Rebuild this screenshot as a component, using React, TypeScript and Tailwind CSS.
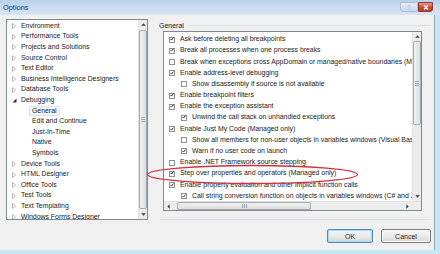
import React from 'react';

const tree = [
  { t: 'Environment', l: 0 },
  { t: 'Performance Tools', l: 0 },
  { t: 'Projects and Solutions', l: 0 },
  { t: 'Source Control', l: 0 },
  { t: 'Text Editor', l: 0 },
  { t: 'Business Intelligence Designers', l: 0 },
  { t: 'Database Tools', l: 0 },
  { t: 'Debugging', l: 0, open: true },
  { t: 'General', l: 1, sel: true },
  { t: 'Edit and Continue', l: 1 },
  { t: 'Just-In-Time', l: 1 },
  { t: 'Native', l: 1 },
  { t: 'Symbols', l: 1 },
  { t: 'Device Tools', l: 0 },
  { t: 'HTML Designer', l: 0 },
  { t: 'Office Tools', l: 0 },
  { t: 'Test Tools', l: 0 },
  { t: 'Text Templating', l: 0 },
  { t: 'Windows Forms Designer', l: 0 },
];

const options = [
  { t: 'Ask before deleting all breakpoints', l: 0, c: true },
  { t: 'Break all processes when one process breaks', l: 0, c: true },
  { t: 'Break when exceptions cross AppDomain or managed/native boundaries (Managed only)', l: 0, c: false },
  { t: 'Enable address-level debugging', l: 0, c: true },
  { t: 'Show disassembly if source is not available', l: 1, c: false },
  { t: 'Enable breakpoint filters', l: 0, c: true },
  { t: 'Enable the exception assistant', l: 0, c: true },
  { t: 'Unwind the call stack on unhandled exceptions', l: 1, c: true },
  { t: 'Enable Just My Code (Managed only)', l: 0, c: true },
  { t: 'Show all members for non-user objects in variables windows (Visual Basic only)', l: 1, c: false },
  { t: 'Warn if no user code on launch', l: 1, c: true },
  { t: 'Enable .NET Framework source stepping', l: 0, c: false },
  { t: 'Step over properties and operators (Managed only)', l: 0, c: true },
  { t: 'Enable property evaluation and other implicit function calls', l: 0, c: true },
  { t: 'Call string conversion function on objects in variables windows (C# and JavaScript only)', l: 1, c: true },
];

function Arrow({ dir }: { dir: 'up' | 'down' | 'left' | 'right' }) {
  const pts = {
    up: '0,4 3.5,0.5 7,4',
    down: '0,0.5 3.5,4 7,0.5',
    left: '4,0 0.5,3.5 4,7',
    right: '0.5,0 4,3.5 0.5,7',
  }[dir];
  const v = dir === 'up' || dir === 'down';
  return (
    <svg width={v ? 5 : 3} height={v ? 3 : 5} viewBox={v ? '0 0 7 4.5' : '0 0 4.5 7'}>
      <polygon points={pts} fill="#404040" />
    </svg>
  );
}

function Grip({ v }: { v: boolean }) {
  return v ? (
    <div className="flex flex-col gap-px">
      <div className="w-[4px] h-px bg-[#9aa4ae]" />
      <div className="w-[4px] h-px bg-[#9aa4ae]" />
      <div className="w-[4px] h-px bg-[#9aa4ae]" />
    </div>
  ) : (
    <div className="flex gap-px">
      <div className="h-[4px] w-px bg-[#9aa4ae]" />
      <div className="h-[4px] w-px bg-[#9aa4ae]" />
      <div className="h-[4px] w-px bg-[#9aa4ae]" />
    </div>
  );
}

function Check({ on }: { on: boolean }) {
  return (
    <div className="w-[6px] h-[6px] border border-[#8e8f8f] bg-white flex items-center justify-center shrink-0">
      {on && (
        <svg width="6" height="6" viewBox="0 0 6 6" className="-mt-px">
          <path d="M0.8 3.1 L2.3 4.6 L5.2 0.9" fill="none" stroke="#111" strokeWidth="1.3" />
        </svg>
      )}
    </div>
  );
}

function Expander({ open }: { open?: boolean }) {
  return open ? (
    <svg width="5" height="5" viewBox="0 0 5 5">
      <polygon points="4.5,0.5 4.5,4.5 0.5,4.5" fill="#333" />
    </svg>
  ) : (
    <svg width="4" height="6" viewBox="0 0 4 6">
      <polygon points="0.5,0.5 3.5,3 0.5,5.5" fill="none" stroke="#a6a6a6" strokeWidth="0.8" />
    </svg>
  );
}

function Button({ label, primary }: { label: string; primary?: boolean }) {
  return (
    <div
      className={`h-[14px] rounded-[2px] border flex items-center justify-center bg-gradient-to-b from-[#f4f4f4] via-[#ebebeb] to-[#d6d6d6] text-[7px] leading-none text-[#222] ${
        primary ? 'w-[46px] border-[#4a8ab8] shadow-[inset_0_0_0_1px_#a8dcf5]' : 'w-[50px] border-[#7a7a7a] shadow-[inset_0_0_0_1px_#fafafa]'
      }`}
    >
      {label}
    </div>
  );
}

export default function App() {
  return (
    <div className="relative w-[440px] h-[254px] overflow-hidden flex flex-col bg-[#c4e6f5] font-['Liberation_Sans',Arial,sans-serif] text-[#202020]">
      {/* title bar */}
      <div className="h-[15px] shrink-0 flex items-center justify-between bg-gradient-to-b from-[#b9d1ec] via-[#c9dcf1] to-[#d7e5f4] pl-[3px] pr-[7px]">
        <span className="text-[7.4px] text-[#1d2f4a] leading-none">Options</span>
        <div className="flex items-start h-full pt-[2px]">
          <div className="w-[18px] h-[10px] rounded-bl-[3px] border border-[#a9bed6] bg-gradient-to-b from-[#e6eef8] to-[#c7d7ea] flex items-center justify-center text-[6px] text-[#9cb0c6] leading-none">
            ?
          </div>
          <div className="w-[15px] h-[10px] rounded-br-[3px] border border-[#8c3a34] bg-gradient-to-b from-[#e79a8e] via-[#cf4a3c] to-[#c33a2a] flex items-center justify-center">
            <svg width="6" height="5" viewBox="0 0 6 5">
              <path d="M1 0.5 L5 4.5 M5 0.5 L1 4.5" stroke="#fff" strokeWidth="1.4" />
            </svg>
          </div>
        </div>
      </div>

      {/* client */}
      <div className="flex-1 min-h-0 flex mb-[4px] mr-[5px] border-r border-[#8fa4b8]">
        <div className="flex-1 min-w-0 bg-[#f0f0f0] flex flex-col pl-[6px] pt-[4px]">
          <div className="flex min-w-0">
            {/* tree */}
            <div className="w-[142px] h-[201px] shrink-0 border border-[#828790] bg-white flex overflow-hidden">
              <div className="flex-1 min-w-0 overflow-hidden pt-[1px]">
                {tree.map((n) => (
                  <div key={n.t} className="h-[10.6px] flex items-center whitespace-nowrap text-[6.9px] leading-none">
                    {n.l === 0 ? (
                      <>
                        <div className="w-[12px] flex justify-center pl-[2px]">
                          <Expander open={n.open} />
                        </div>
                        <span className="pl-[2px]">{n.t}</span>
                      </>
                    ) : (
                      <span
                        className={`ml-[22px] px-[2px] h-[10px] flex items-center ${
                          n.sel ? 'bg-[#f3f6fa] border border-[#d9e3ee] rounded-[1px]' : 'border border-transparent'
                        }`}
                      >
                        {n.t}
                      </span>
                    )}
                  </div>
                ))}
              </div>
              <div className="w-[9px] shrink-0 bg-[#ececec] border-l border-[#e2e2e2] flex flex-col items-center">
                <div className="h-[9px] flex items-center justify-center">
                  <Arrow dir="up" />
                </div>
                <div className="flex-1 w-[8px] my-[1px] border border-[#a2a9b1] rounded-[2px] bg-gradient-to-r from-[#f3f3f3] to-[#dcdcdc] flex items-center justify-center">
                  <Grip v />
                </div>
                <div className="h-[9px] flex items-center justify-center">
                  <Arrow dir="down" />
                </div>
              </div>
            </div>

            {/* right panel */}
            <div className="flex-1 min-w-0 ml-[9px] mr-[3px] flex flex-col">
              <div className="h-[12px] flex items-center gap-[5px] pl-[2px]">
                <span className="text-[7px] leading-none">General</span>
                <div className="flex-1 h-px bg-[#d5dfe5] mt-[1px]" />
              </div>
              <div className="ml-[6px] mr-[9px] h-[180px] border border-[#828790] bg-white flex flex-col min-w-0">
                <div className="flex-1 min-h-0 flex overflow-hidden">
                  <div className="flex-1 min-w-0 overflow-hidden pt-[2px]">
                    {options.map((o) => (
                      <div
                        key={o.t}
                        className={`h-[11.2px] flex items-center gap-[5px] whitespace-nowrap text-[6.9px] leading-none ${
                          o.l ? 'pl-[17px]' : 'pl-[5px]'
                        }`}
                      >
                        <Check on={o.c} />
                        <span>{o.t}</span>
                      </div>
                    ))}
                  </div>
                  <div className="w-[9px] shrink-0 bg-[#ececec] border-l border-[#e2e2e2] flex flex-col items-center">
                    <div className="h-[9px] flex items-center justify-center">
                      <Arrow dir="up" />
                    </div>
                    <div className="h-[84px] w-[8px] border border-[#a2a9b1] rounded-[2px] bg-gradient-to-r from-[#f3f3f3] to-[#dcdcdc] flex items-center justify-center">
                      <Grip v />
                    </div>
                    <div className="flex-1" />
                    <div className="h-[9px] flex items-center justify-center">
                      <Arrow dir="down" />
                    </div>
                  </div>
                </div>
                <div className="h-[9px] shrink-0 flex border-t border-[#e2e2e2] bg-[#ececec]">
                  <div className="flex-1 flex items-center">
                    <div className="w-[9px] flex justify-center">
                      <Arrow dir="left" />
                    </div>
                    <div className="w-[134px] h-[8px] border border-[#a2a9b1] rounded-[2px] bg-gradient-to-b from-[#f3f3f3] to-[#dcdcdc] flex items-center justify-center ml-[4px]">
                      <Grip v={false} />
                    </div>
                    <div className="flex-1" />
                    <div className="w-[9px] flex justify-center">
                      <Arrow dir="right" />
                    </div>
                  </div>
                  <div className="w-[9px] bg-[#ececec]" />
                </div>
              </div>
              <div className="mt-[8px] ml-[3px] h-px bg-[#d5dfe5]" />
            </div>
          </div>

          {/* buttons */}
          <div className="mt-[9px] flex justify-end gap-[8px] pr-[3px]">
            <Button label="OK" primary />
            <Button label="Cancel" />
          </div>
        </div>
      </div>

      {/* red annotation */}
      <svg className="absolute left-[146px] top-[164px]" width="213" height="21" viewBox="0 0 213 21">
        <ellipse cx="106.5" cy="10.5" rx="105" ry="9" fill="none" stroke="#d2313b" strokeWidth="1.3" />
      </svg>
    </div>
  );
}
